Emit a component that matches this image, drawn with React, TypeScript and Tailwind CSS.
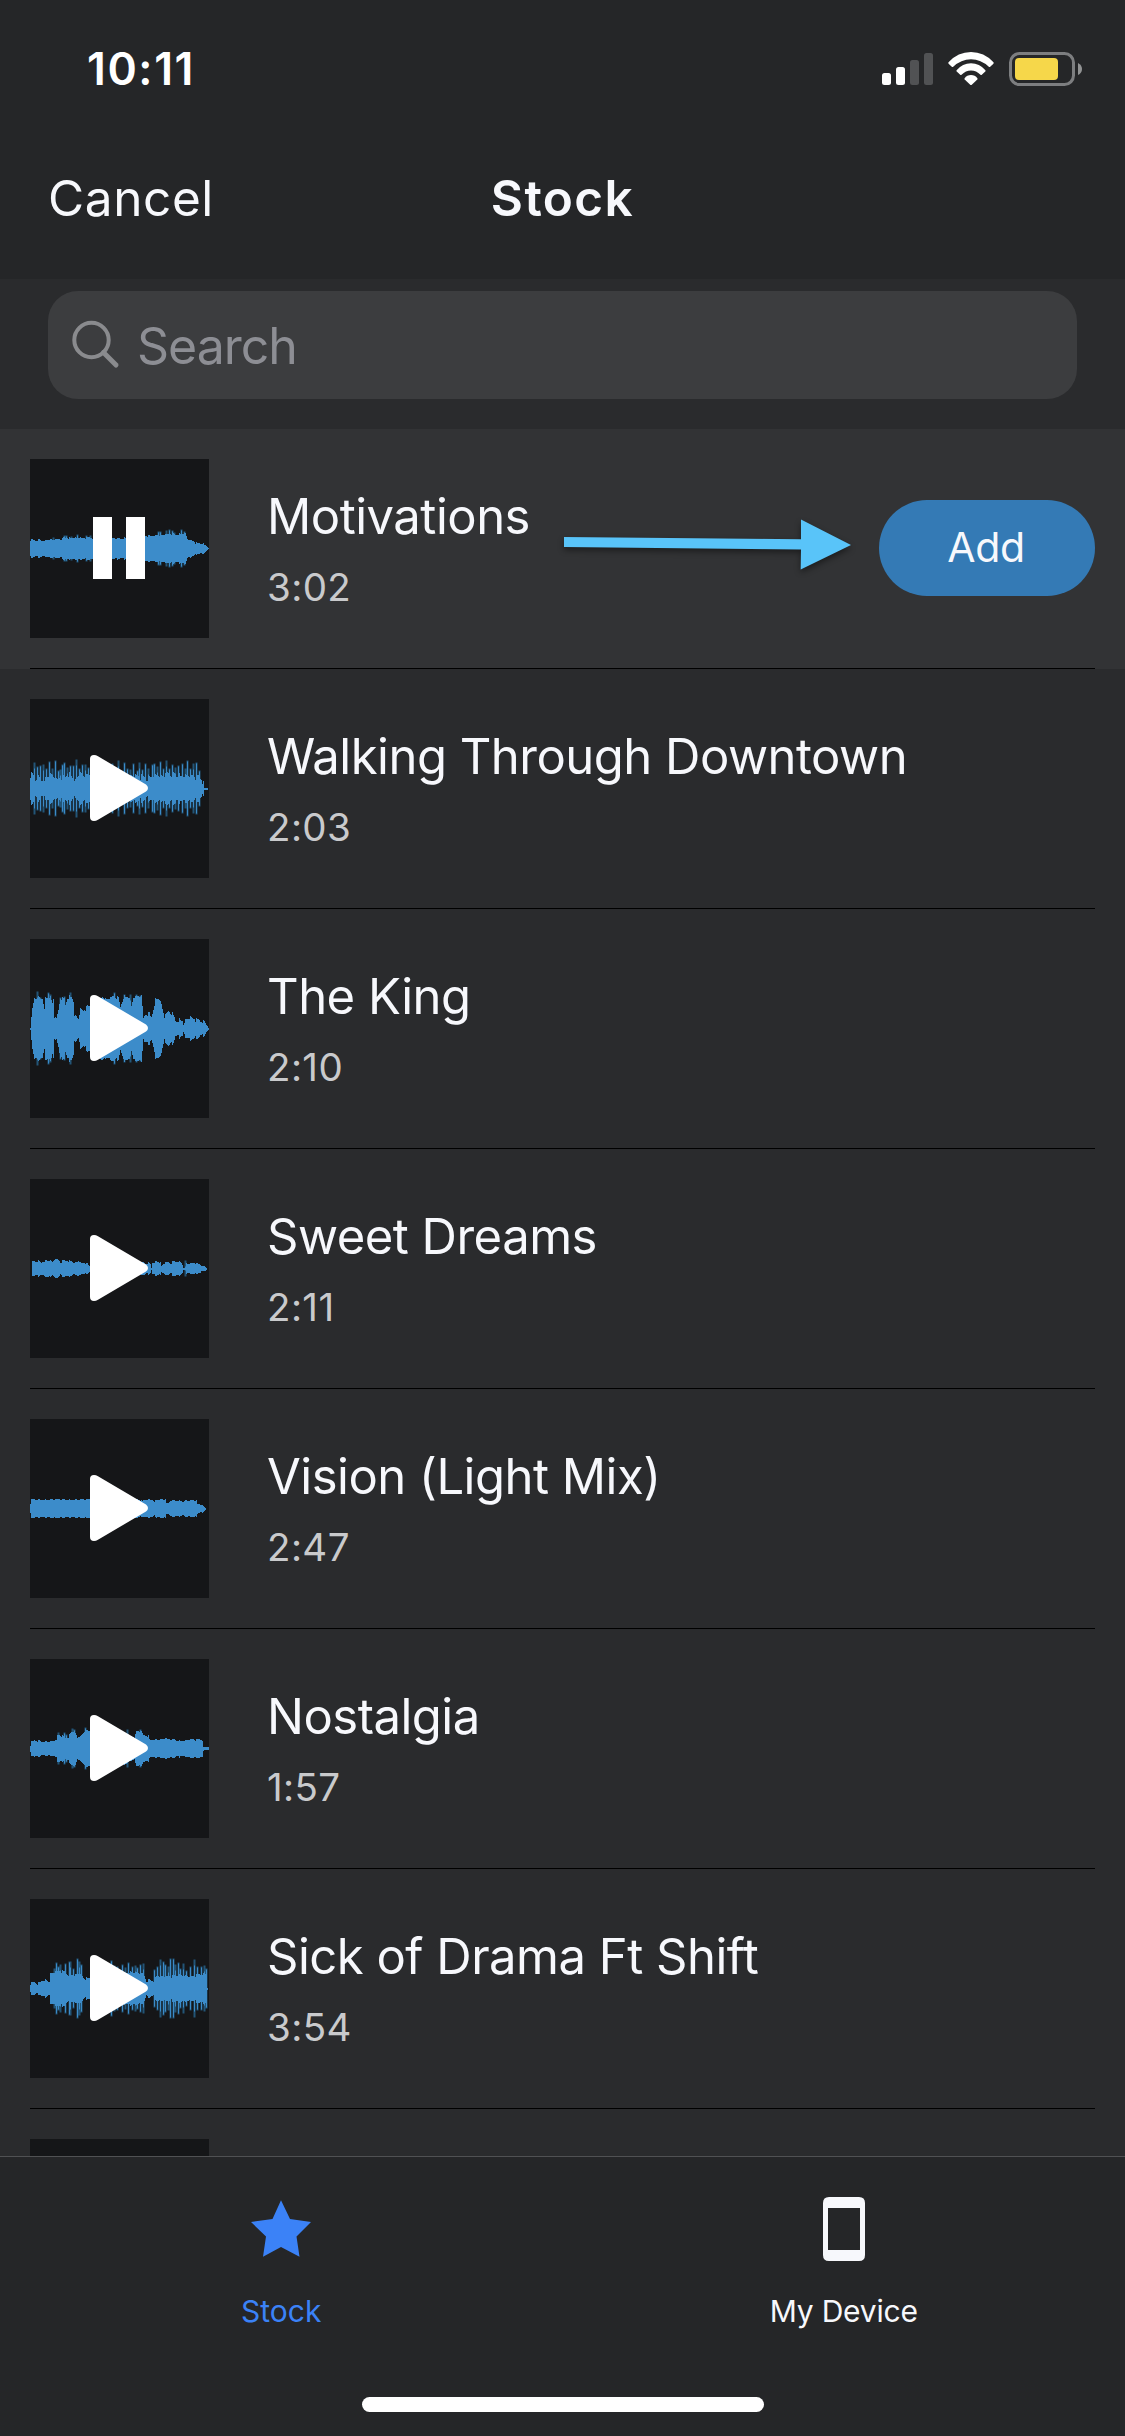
import { useState } from 'react';
import clsx from 'clsx';

type Point = [number, number];

interface Track {
  id: string;
  name: string;
  duration: string;
  // [x, amplitude] pairs, in pixels of the 179px thumbnail
  envelope: Point[];
  spikes?: Point[];
  jitter: number;
}

const THUMB = 179;
const MID = 89.5;

const tracks: Track[] = [
  {
    id: 'motivations',
    name: 'Motivations',
    duration: '3:02',
    jitter: 1,
    envelope: [[0, 8.5], [12, 8.5], [24, 9], [31, 9.5], [34, 11], [45, 11], [52, 10.5], [62, 11], [82, 10], [96, 10.5], [115, 13], [122, 13], [126, 14], [131, 13], [140, 15], [146, 14], [155, 15], [157, 9.5], [161, 8], [167, 5], [170, 5], [172, 6], [174, 4], [178, 0.5]],
    spikes: [[23, 11], [34, 13], [36, 13], [41, 12], [47, 14], [56, 13], [60, 13], [128, 17], [130, 17], [136, 18], [139, 19], [142, 18], [144, 16], [151, 19], [154, 17]],
  },
  {
    id: 'walking',
    name: 'Walking Through Downtown',
    duration: '2:03',
    jitter: 3,
    envelope: [[0, 14], [2, 14], [5, 9], [7, 13], [10, 8], [13, 10], [16, 12], [20, 14], [24, 11], [27, 8], [30, 12], [34, 12], [37, 15], [41, 13], [45, 9], [49, 15], [54, 12], [60, 13], [100, 13], [110, 12], [118, 10], [122, 14], [127, 14], [133, 12], [137, 15], [145, 14], [150, 13], [155, 14], [163, 12], [168, 12], [171, 11], [173, 5], [174, 1], [177, 1]],
    spikes: [[4, 26], [7, 22], [10, 23], [13, 24], [16, 20], [19, 27], [22, 20], [25, 28], [28, 18], [30, 19], [32, 24], [34, 26], [37, 21], [40, 23], [43, 23], [46, 29], [49, 20], [52, 24], [55, 24], [58, 21], [82, 25], [88, 28], [94, 26], [97, 20], [100, 19], [103, 25], [107, 18], [109, 26], [112, 19], [115, 25], [118, 20], [122, 24], [124, 25], [127, 22], [130, 27], [133, 20], [136, 28], [139, 20], [142, 24], [145, 21], [148, 23], [152, 25], [155, 20], [157, 28], [160, 20], [163, 25], [166, 26], [169, 18]],
  },
  {
    id: 'king',
    name: 'The King',
    duration: '2:10',
    jitter: 2,
    envelope: [[0, 1], [2, 19], [4, 30], [7, 32], [9, 30], [12, 31], [14, 22], [15, 31], [20, 32], [22, 25], [23, 30], [24, 11], [26, 9], [28, 18], [30, 31], [33, 29], [35, 24], [37, 31], [41, 32], [43, 28], [44, 14], [48, 10], [50, 19], [53, 17], [57, 22], [60, 22], [72, 32], [76, 29], [80, 30], [84, 33], [88, 30], [90, 22], [93, 32], [99, 32], [101, 22], [103, 31], [107, 32], [111, 32], [113, 10], [115, 15], [119, 15], [121, 12], [123, 20], [125, 30], [129, 30], [131, 24], [134, 11], [138, 17], [142, 15], [145, 8], [149, 9], [152, 8], [153, 5], [155, 9], [160, 11], [165, 9], [171, 8], [175, 6], [178, 1]],
    spikes: [[7, 37], [10, 31], [18, 36], [20, 34], [30, 31], [34, 32], [40, 36], [84, 36], [94, 34], [100, 34], [106, 34], [110, 33]],
  },
  {
    id: 'sweet',
    name: 'Sweet Dreams',
    duration: '2:11',
    jitter: 1,
    envelope: [[0, 0], [1.5, 0], [2, 7], [8, 7.5], [11, 6.5], [14, 8], [19, 8.5], [22, 6], [24, 9], [28, 8.5], [30, 6.5], [33, 8], [40, 8], [44, 6], [48, 7.5], [51, 5], [54, 6], [58, 4], [60, 2], [112, 6], [120, 5], [121, 1], [122, 6], [126, 7.5], [130, 6], [131, 3], [133, 5], [138, 6], [140, 5], [144, 7.5], [149, 7], [152, 4.5], [153, 1], [155, 1], [156, 5], [164, 5.5], [170, 4], [171, 2.5], [175, 2], [177, 0]],
    spikes: [[155, 8]],
  },
  {
    id: 'vision',
    name: 'Vision (Light Mix)',
    duration: '2:47',
    jitter: 0.7,
    envelope: [[0, 5], [1, 9], [60, 9], [107, 9], [112, 7.5], [115, 9], [122, 9], [124, 7.5], [126, 9], [135, 9], [136, 5], [138, 5.5], [140, 8], [149, 8], [152, 7], [155, 8], [166, 8], [167, 4.5], [172, 4], [176, 0]],
  },
  {
    id: 'nostalgia',
    name: 'Nostalgia',
    duration: '1:57',
    jitter: 1,
    envelope: [[0, 3], [1, 6.5], [4, 8], [8, 8], [11, 7], [25, 7.5], [26, 8], [27, 13], [32, 13], [34, 11], [38, 12], [41, 17], [44, 18], [47, 11], [50, 12], [53, 15], [55, 18], [60, 17], [95, 16], [99, 13], [104, 11], [106, 17], [111, 17], [113, 13], [118, 13], [119, 9], [136, 9.5], [142, 9], [150, 8], [160, 9], [172, 9], [173, 2], [174, 1.3], [178, 1.3]],
    spikes: [[28, 16], [34, 16], [36, 14], [42, 20], [44, 19], [55, 21], [97, 19], [110, 19]],
  },
  {
    id: 'drama',
    name: 'Sick of Drama Ft Shift',
    duration: '3:54',
    jitter: 1.4,
    envelope: [[0, 5], [5, 6], [8, 5], [11, 8], [15, 9], [19, 7], [20, 15], [26, 17], [34, 17], [38, 14], [43, 14], [49, 15], [52, 12], [53, 10], [60, 10], [80, 14], [88, 13], [100, 17], [108, 15], [113, 14], [116, 8], [119, 9], [123, 8], [126, 13], [135, 12], [142, 12], [150, 14], [160, 12], [168, 14], [176, 15], [177, 1]],
    spikes: [[24, 20], [26, 26], [28, 22], [30, 24], [35, 25], [39, 27], [40, 27], [43, 20], [47, 30], [49, 27], [51, 24], [81, 28], [84, 23], [87, 22], [92, 24], [95, 21], [98, 26], [102, 22], [105, 23], [107, 21], [110, 24], [113, 25], [124, 19], [127, 22], [130, 29], [133, 27], [135, 24], [138, 22], [140, 30], [143, 30], [145, 24], [148, 26], [150, 20], [153, 25], [156, 18], [160, 22], [164, 29], [167, 22], [171, 22], [174, 23], [176, 20]],
  },
  { id: 'next', name: '', duration: '', jitter: 0, envelope: [] },
];

function amplitudeAt(envelope: Point[], x: number) {
  const next = envelope.findIndex(p => p[0] >= x);
  if (next < 0) return 0;
  if (next === 0) return envelope[0][1];
  const [x0, a0] = envelope[next - 1];
  const [x1, a1] = envelope[next];
  return a0 + ((a1 - a0) * (x - x0)) / (x1 - x0);
}

function column(x: number, amp: number, width = 1) {
  return `M${x} ${(MID - amp).toFixed(1)}h${width}v${(amp * 2).toFixed(1)}h-${width}z`;
}

function Waveform({ track }: { track: Track }) {
  let body = '';
  for (let x = 0; x < THUMB; x++) {
    const base = amplitudeAt(track.envelope, x);
    const noise = (((x * 7 + (x % 5) * 3) % 11) / 11 - 0.5) * 2 * track.jitter;
    if (base > 0) body += column(x, Math.max(0.5, base > 4 ? base + noise : base));
  }
  const spikes = track.spikes ?? [];
  return (
    <>
      <path d={spikes.map(([x, a]) => column(x - 0.5, a, 2)).join('')} fill="#235577" />
      <path d={spikes.map(([x, a], i) => column(x, i % 3 ? a - 1 : a - 6)).join('')} fill="#3b8bc9" />
      <path d={body} fill="#3c8cca" shapeRendering="crispEdges" />
    </>
  );
}

function Thumbnail({ track, playing }: { track: Track; playing: boolean }) {
  return (
    <svg className="size-[179px] shrink-0 bg-[#151618]" viewBox="0 0 179 179">
      <Waveform track={track} />
      {playing ? (
        <path d="M63 58h19v62H63zM96 58h19v62H96z" fill="#fff" />
      ) : (
        <path d="M60 60Q60 56 64 56Q66 56 68 57.3L116 85.5Q118 87 118 89Q118 91 116 92.5L68 120.7Q66 122 64 122Q60 122 60 118Z" fill="#fff" />
      )}
    </svg>
  );
}

function StatusBar() {
  return (
    <div className="flex h-[132px] items-start justify-between pl-[87px] pr-[43px]">
      <span className="mt-[42px] text-[44.5px] leading-[54px] font-semibold tracking-[1.6px] text-white">10:11</span>
      <svg className="mt-[50px] h-[38px] w-[202px]" viewBox="880 50 202 38">
        <rect x="882" y="73" width="9" height="12" rx="2.5" fill="#fff" />
        <rect x="896" y="67" width="9" height="18" rx="2.5" fill="#fff" />
        <rect x="910" y="60" width="9" height="25" rx="2.5" fill="#515254" />
        <rect x="924" y="53" width="9" height="32" rx="2.5" fill="#515254" />
        <g fill="#fff">
          <path d="M948.5 62.2Q958 52 971 52T993.5 62.2Q994 63 993.4 63.7L990.2 66.8Q989.5 67.4 988.8 66.8Q981 59.2 971 59.2T953.2 66.8Q952.5 67.4 951.8 66.8L948.6 63.7Q948 63 948.5 62.2Z" />
          <path d="M956.6 70.2Q962.5 63.2 971 63.2T985.4 70.2Q985.9 71 985.3 71.6L981.8 74.8Q981.1 75.3 980.5 74.7Q976.3 70.4 971 70.4T961.5 74.7Q960.9 75.3 960.2 74.8L956.7 71.6Q956.1 71 956.6 70.2Z" />
          <path d="M964.6 78.3Q967 75 971 75T977.4 78.3Q977.8 79 977.3 79.6L971.8 84.8Q971 85.4 970.2 84.8L964.7 79.6Q964.2 79 964.6 78.3Z" />
        </g>
        <rect x="1010.5" y="53.5" width="63" height="31" rx="9" fill="none" stroke="#7d7e80" strokeWidth="3" />
        <rect x="1015" y="58" width="43" height="22" rx="4" fill="#f6d74a" />
        <path d="M1078 63Q1082 65 1082 69T1078 75Z" fill="#929394" />
      </svg>
    </div>
  );
}

function Header() {
  return (
    <div className="grid h-[147px] grid-cols-3 px-12 pt-9 text-[49.5px] leading-[60px] text-[#f7f8fc]">
      <button className="h-[60px] text-left tracking-[0.6px]">Cancel</button>
      <h1 className="text-center font-semibold tracking-[1.4px]">Stock</h1>
    </div>
  );
}

function SearchBar() {
  return (
    <div className="h-[150px] bg-[#2a2b2d] px-12 pt-3">
      <div className="flex h-[108px] items-center rounded-[30px] bg-[#3c3d3f] pl-[23px]">
        <svg className="mt-[-2px] size-[50px]" viewBox="0 0 50 50" fill="none" stroke="#8a8b8e" strokeWidth="4">
          <circle cx="20.5" cy="21" r="17.2" />
          <path d="M32.5 33.5L45 46" strokeWidth="5" strokeLinecap="round" />
        </svg>
        <span className="ml-4 mt-px text-[50px] leading-[60px] tracking-[-1px] text-[#8d8e94]">Search</span>
      </div>
    </div>
  );
}

function Arrow() {
  return (
    <svg className="pointer-events-none absolute left-[555px] top-[80px] h-[80px] w-[310px] drop-shadow-[0_3px_3px_rgba(0,0,0,0.45)]" viewBox="555 509 310 80">
      <path d="M564 537L801 539.3V519.5L851 545L800.7 569.5L801 549.5L564 547Z" fill="#59c4f9" />
    </svg>
  );
}

interface TrackRowProps {
  track: Track;
  selected: boolean;
  onSelect: (id: string) => void;
}

function TrackRow({ track, selected, onSelect }: TrackRowProps) {
  return (
    <li onClick={() => onSelect(track.id)} className={clsx('relative h-[240px] shrink-0 px-[30px]', selected && 'bg-[#323335]')}>
      <div className="flex h-full items-center border-b border-black">
        <Thumbnail track={track} playing={selected} />
        <div className="ml-[58px] flex flex-1 flex-col gap-4 whitespace-nowrap pt-px">
          <p className="text-[49px] leading-[60px] tracking-[-0.5px] text-[#f7f8fc]">{track.name}</p>
          <p className="text-[38.5px] leading-[48px] tracking-[0.4px] text-[#c9cacc]">{track.duration}</p>
        </div>
        {selected && (
          <button className="mb-px h-24 w-[216px] rounded-full bg-[#347ab5] pr-0.5 text-[41px] tracking-[-0.3px] text-[#f7f8fc]">Add</button>
        )}
      </div>
      {selected && <Arrow />}
    </li>
  );
}

function TabBar() {
  return (
    <nav className="grid h-[280px] shrink-0 grid-cols-2 border-t border-[#505153] bg-[#252628] text-[30px] leading-[36px]">
      <div className="flex flex-col items-center pt-[39px] text-[#3b82f7]">
        <svg className="h-[66px] w-[62px]" viewBox="250 2196 62 66">
          <path d="M281 2200.3L290 2219L311 2222L296.500 2236.500L299.500 2256.700L281 2247L263 2256.700L266 2236.500L251 2222L272.500 2219Z" fill="currentColor" />
        </svg>
        <span className="mt-[31px]">Stock</span>
      </div>
      <div className="flex flex-col items-center pt-[39px] text-[#f7f8fc]">
        <svg className="h-[66px] w-[42px]" viewBox="823 2196 42 66">
          <path fillRule="evenodd" d="M829 2197h30q6 0 6 6v52q0 6-6 6h-30q-6 0-6-6v-52q0-6 6-6zM828 2208v42h32v-42z" fill="currentColor" />
        </svg>
        <span className="mt-[31px] tracking-[-0.2px]">My Device</span>
      </div>
      <div className="col-span-2 mb-6 h-[15px] w-[402px] self-end justify-self-center rounded-full bg-white" />
    </nav>
  );
}

export default function App() {
  const [selectedId, setSelectedId] = useState('motivations');

  return (
    <div className="flex h-[2436px] w-[1125px] flex-col overflow-hidden bg-[#252628] font-['Inter',sans-serif]">
      <StatusBar />
      <Header />
      <SearchBar />
      <ul className="flex min-h-0 flex-1 flex-col overflow-hidden bg-[#2a2b2d]">
        {tracks.map(track => (
          <TrackRow key={track.id} track={track} selected={track.id === selectedId} onSelect={setSelectedId} />
        ))}
      </ul>
      <TabBar />
    </div>
  );
}
